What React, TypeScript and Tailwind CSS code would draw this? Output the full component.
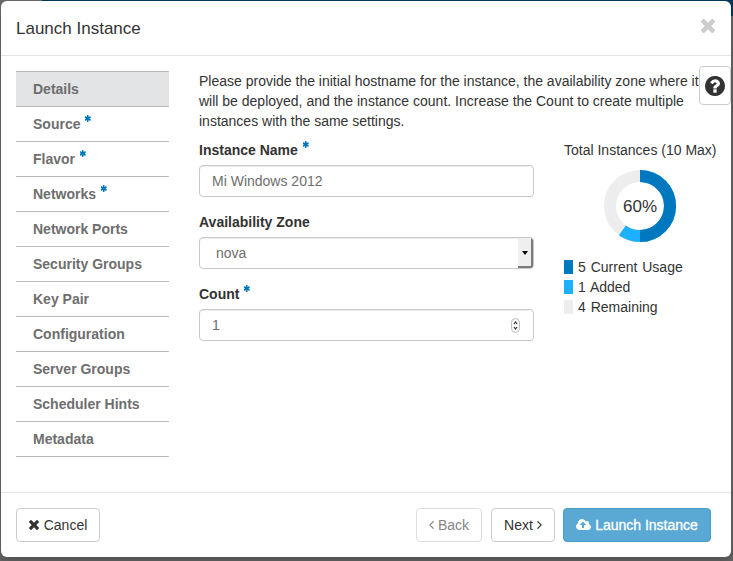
import React from "react";

const ICONS = {
  times:
    "M1490 1322q0 40-28 68l-136 136q-28 28-68 28t-68-28l-294-294-294 294q-28 28-68 28t-68-28l-136-136q-28-28-28-68t28-68l294-294-294-294q-28-28-28-68t28-68l136-136q28-28 68-28t68 28l294 294 294-294q28-28 68-28t68 28l136 136q28 28 28 68t-28 68l-294 294 294 294q28 28 28 68z",
  question:
    "M1024 1376v-192q0-14-9-23t-23-9h-192q-14 0-23 9t-9 23v192q0 14 9 23t23 9h192q14 0 23-9t9-23zm256-672q0-88-55.5-163t-138.5-116-170-41q-243 0-371 213-15 24 8 42l132 100q7 6 19 6 16 0 25-12 53-68 86-92 34-24 86-24 48 0 85.5 26t37.5 59q0 38-20 61t-68 45q-63 28-115.5 86.5t-52.5 125.5v36q0 14 9 23t23 9h192q14 0 23-9t9-23q0-19 21.5-49.5t54.5-49.5q32-18 49-28.5t46-35 44.5-48 28-60.5 12.5-81zm384 192q0 209-103 385.5t-279.5 279.5-385.5 103-385.5-103-279.5-279.5-103-385.5 103-385.5 279.5-279.5 385.5-103 385.5 103 279.5 279.5 103 385.5z",
  asterisk:
    "M1482 1050q46 26 59.5 77.5t-12.5 97.5l-64 110q-26 46-77.5 59.5t-97.5-12.5l-266-153v307q0 52-38 90t-90 38h-128q-52 0-90-38t-38-90v-307l-266 153q-46 26-97.5 12.5t-77.5-59.5l-64-110q-26-46-12.5-97.5t59.5-77.5l266-154-266-154q-46-26-59.5-77.5t12.5-97.5l64-110q26-46 77.5-59.5t97.5 12.5l266 153v-307q0-52 38-90t90-38h128q52 0 90 38t38 90v307l266-153q46-26 97.5-12.5t77.5 59.5l64 110q26 46 12.5 97.5t-59.5 77.5l-266 154z",
  cloud:
    "M1216 864q0-14-9-23l-352-352q-9-9-23-9t-23 9l-351 351q-10 12-10 24 0 14 9 23t23 9h224v352q0 13 9.5 22.5t22.5 9.5h192q13 0 22.5-9.5t9.5-22.5v-352h224q13 0 22.5-9.5t9.5-22.5zm640 288q0 159-112.5 271.5t-271.5 112.5h-1088q-185 0-316.5-131.5t-131.5-316.5q0-130 70-240t188-165q-2-30-2-43 0-212 150-362t362-150q156 0 285.5 87t188.5 231q71-62 166-62 106 0 181 75t75 181q0 76-41 138 130 31 213.5 135.5t83.5 238.5z",
  left: "M1203 544q0 13-10 23l-393 393 393 393q10 10 10 23t-10 23l-50 50q-10 10-23 10t-23-10l-466-466q-10-10-10-23t10-23l466-466q10-10 23-10t23 10l50 50q10 10 10 23z",
  right:
    "M1171 960q0 13-10 23l-466 466q-10 10-23 10t-23-10l-50-50q-10-10-10-23t10-23l393-393-393-393q-10-10-10-23t10-23l50-50q10-10 23-10t23 10l466 466q10 10 10 23z",
};

function Icon({ name, box, className }: { name: keyof typeof ICONS; box: string; className: string }) {
  return (
    <svg viewBox={box} className={className} fill="currentColor" aria-hidden="true">
      <path d={ICONS[name]} />
    </svg>
  );
}

function Required() {
  return <Icon name="asterisk" box="224 128 1344 1536" className="mb-[12px] ml-[5px] h-[7px] w-[6px] text-[#0078bf]" />;
}

const STEPS: { label: string; required?: boolean }[] = [
  { label: "Details" },
  { label: "Source", required: true },
  { label: "Flavor", required: true },
  { label: "Networks", required: true },
  { label: "Network Ports" },
  { label: "Security Groups" },
  { label: "Key Pair" },
  { label: "Configuration" },
  { label: "Server Groups" },
  { label: "Scheduler Hints" },
  { label: "Metadata" },
];

function Steps() {
  return (
    <nav className="h-[386px] w-[153px] shrink-0 border-t border-[#b8b8b8]">
      {STEPS.map((s, i) => (
        <div
          key={s.label}
          className={`flex h-[35px] items-center border-b border-[#b8b8b8] pl-[17px] text-sm font-bold text-[#6e6e6e] ${i === 0 ? "bg-[#e2e4e6]" : ""}`}
        >
          {s.label}
          {s.required && <Required />}
        </div>
      ))}
    </nav>
  );
}

function Label({ text, required }: { text: string; required?: boolean }) {
  return (
    <div className="flex h-[20px] items-center font-bold">
      {text}
      {required && <Required />}
    </div>
  );
}

const FIELD =
  "mt-[5px] mb-[15px] flex h-[32px] w-[335px] items-center rounded-[4px] border border-[#c8c8c8] bg-white pl-3 text-[#6e6e6e] shadow-[inset_0_1px_1px_rgba(0,0,0,0.075)]";

function Form() {
  return (
    <div className="w-[335px] shrink-0">
      <Label text="Instance Name" required />
      <div className={FIELD}>Mi Windows 2012</div>
      <Label text="Availability Zone" />
      <div className={`${FIELD} justify-between overflow-hidden`}>
        <span className="pl-1">nova</span>
        <span className="flex h-[30px] w-[15px] items-center justify-center border-r-2 border-b-2 border-[#7b7b7b] bg-[#efefef]">
          <svg viewBox="0 0 6 4" className="h-[4px] w-[6px] translate-y-px">
            <path d="M0 0h6L3 4z" />
          </svg>
        </span>
      </div>
      <Label text="Count" required />
      <div className={`${FIELD} justify-between pr-[13px]`}>
        <span>1</span>
        <svg viewBox="0 0 9 15" className="h-[15px] w-[9px]" fill="none">
          <rect x="0.5" y="0.5" width="8" height="14" rx="4" fill="#fafafa" stroke="#bdbdbd" />
          <path d="M3 6l1.5-2L6 6M3 9l1.5 2L6 9" stroke="#333" strokeWidth="1.2" />
        </svg>
      </div>
    </div>
  );
}

function Quota() {
  return (
    <div className="ml-[30px] w-[160px] shrink-0">
      <div className="h-[20px] whitespace-nowrap">Total Instances (10 Max)</div>
      <svg viewBox="0 0 72 72" className="mt-[10px] ml-[40px] h-[72px] w-[72px]">
        <g fill="none" strokeWidth="12" transform="rotate(-90 36 36)">
          <circle cx="36" cy="36" r="30" stroke="#ededed" />
          <circle cx="36" cy="36" r="30" stroke="#1cb0ff" pathLength="10" strokeDasharray="6 4" />
          <circle cx="36" cy="36" r="30" stroke="#0078bf" pathLength="10" strokeDasharray="5 5" />
        </g>
        <text x="36" y="42" textAnchor="middle" fontSize="17" fill="#333">
          60%
        </text>
      </svg>
      <div className="mt-[15px]">
        <Legend swatch="bg-[#0078bf]" text="5 Current Usage" />
        <Legend swatch="bg-[#1cb0ff]" text="1 Added" />
        <Legend swatch="bg-[#ededed]" text="4 Remaining" />
      </div>
    </div>
  );
}

function Legend({ swatch, text }: { swatch: string; text: string }) {
  return (
    <div className="flex h-[20px] items-center [word-spacing:1px]">
      <span className={`mr-[5px] h-[14px] w-[9px] ${swatch}`} />
      {text}
    </div>
  );
}

const BUTTON = "flex h-[34px] items-center justify-center rounded-[4px] border whitespace-nowrap";

export default function App() {
  return (
    <div className="relative h-[561px] w-[733px] overflow-hidden bg-[#646464] font-['Liberation_Sans',Arial,sans-serif] text-sm leading-5 text-[#333]">
      <div className="flex h-4">
        <div className="w-[42px] bg-[#6b6b6b]" />
        <div className="flex-1 bg-[#003a5c]" />
      </div>
      <div className="absolute top-px left-px flex h-[556px] w-[730px] flex-col rounded-[6px] bg-white shadow-[0_4px_10px_rgba(0,0,0,0.2)]">
        <header className="flex h-[55px] shrink-0 items-center justify-between border-b border-[#e3e3e3] pr-[16px] pl-[15px]">
          <h1 className="pt-[2px] text-[17px]">Launch Instance</h1>
          <Icon name="times" box="302 366 1188 1188" className="mb-[5px] h-[14px] w-[14px] text-[#ccc]" />
        </header>
        <main className="flex min-h-0 flex-1 pt-[15px] pl-[15px]">
          <Steps />
          <section className="ml-[30px]">
            <p className="w-[520px] whitespace-nowrap">
              Please provide the initial hostname for the instance, the availability zone where it
              <br />
              will be deployed, and the instance count. Increase the Count to create multiple
              <br />
              instances with the same settings.
            </p>
            <div className="mt-[9px] flex">
              <Form />
              <Quota />
            </div>
          </section>
        </main>
        <footer className="flex h-[65px] shrink-0 items-start border-t border-[#e3e3e3] px-[15px] pt-[15px]">
          <button className={`${BUTTON} w-[84px] border-[#ccc]`}>
            <Icon name="times" box="302 366 1188 1188" className="mr-[5px] h-[10px] w-[10px]" />
            Cancel
          </button>
          <button className={`${BUTTON} ml-auto w-[66px] border-[#ddd] text-[#858585]`}>
            <Icon name="left" box="590 480 630 960" className="mr-[4px] h-[8px] w-[5px]" />
            Back
          </button>
          <button className={`${BUTTON} ml-[9px] w-[64px] border-[#ccc]`}>
            Next
            <Icon name="right" box="570 480 630 960" className="ml-[4px] h-[8px] w-[5px]" />
          </button>
          <button className={`${BUTTON} ml-[8px] mr-[5px] w-[148px] border-[#4d9dca] bg-[#5aa8d4] text-white [-webkit-text-stroke:0.3px_white]`}>
            <Icon name="cloud" box="-64 0 1920 1792" className="mr-[4px] h-[14px] w-[15px]" />
            Launch Instance
          </button>
        </footer>
        <button className="absolute top-[65px] right-0 flex h-[39px] w-[32px] items-center justify-center rounded-[4px] border border-[#ccc] bg-white">
          <Icon name="question" box="128 128 1536 1536" className="h-[20px] w-[20px]" />
        </button>
      </div>
    </div>
  );
}
